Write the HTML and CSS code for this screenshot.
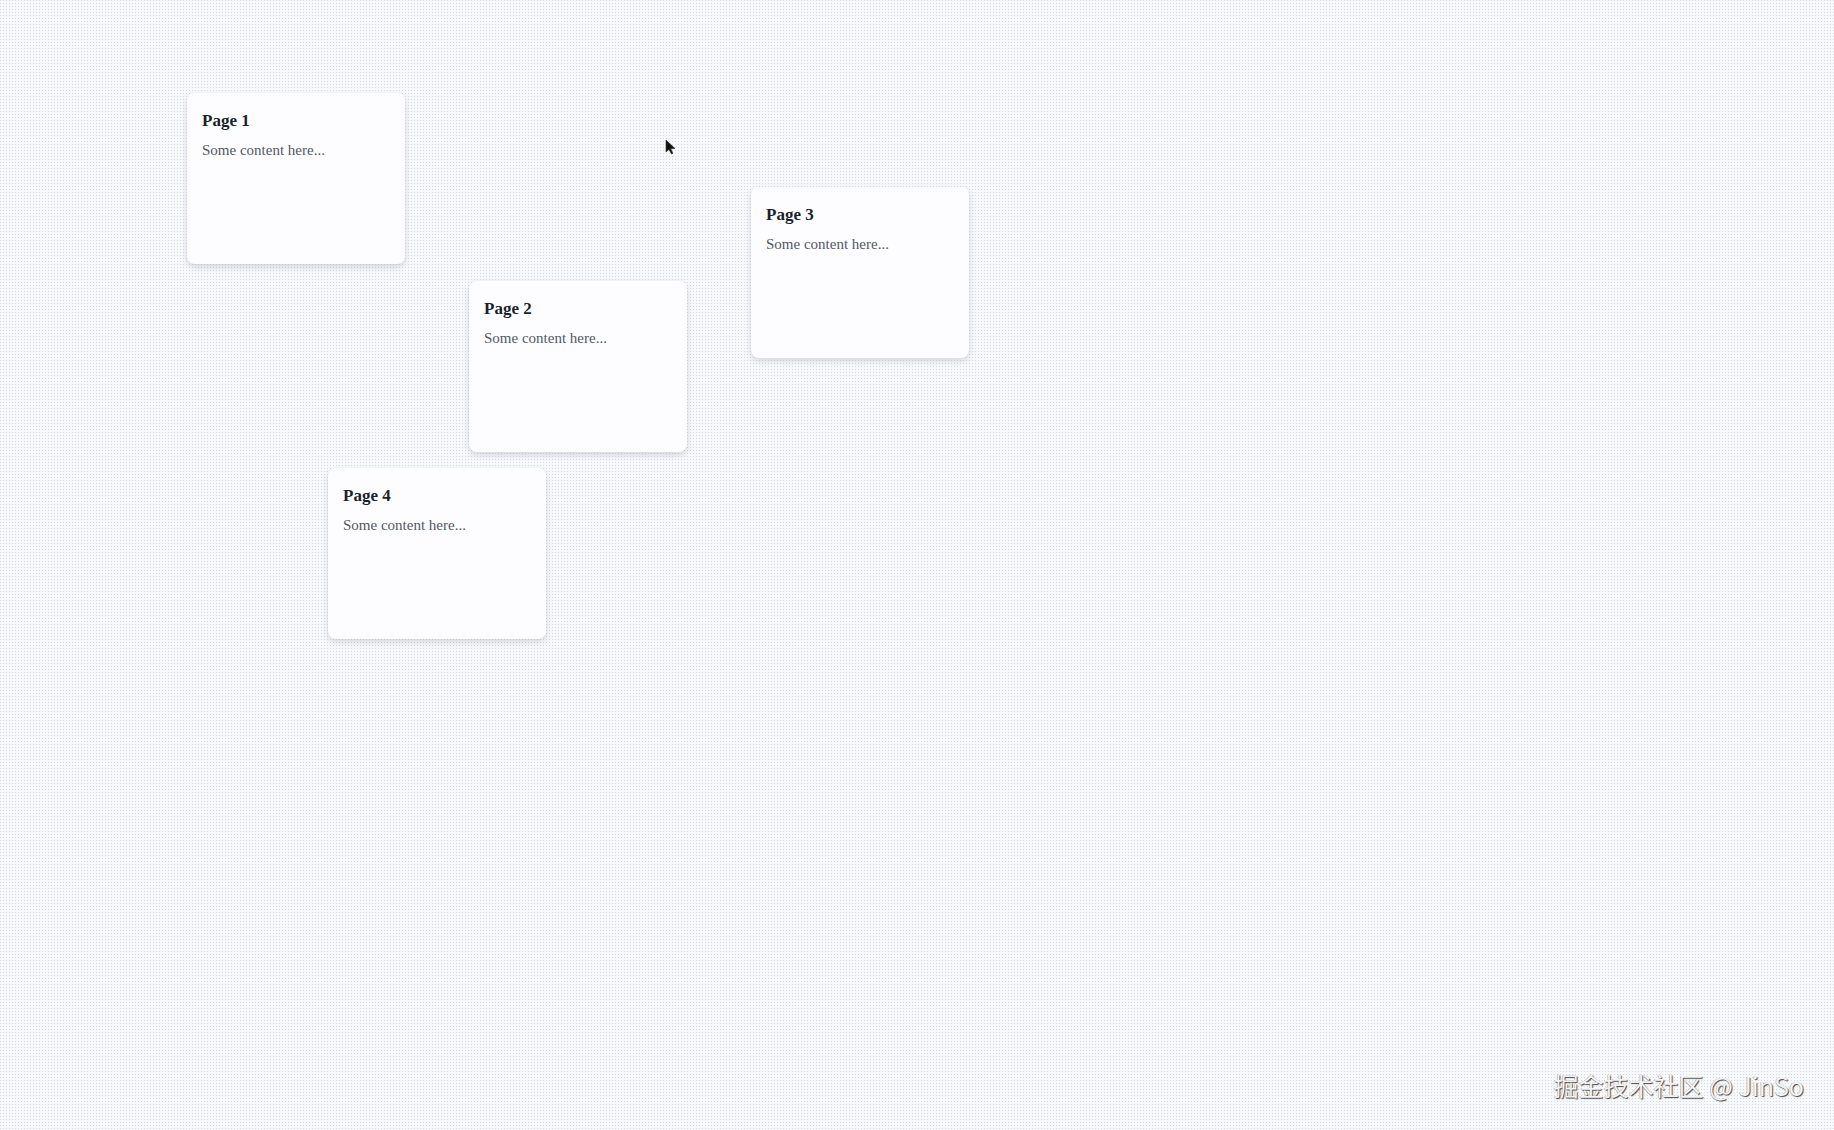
FILE: index.html
```html
<!DOCTYPE html>
<html lang="zh-CN">
<head>
<meta charset="utf-8">
<title>Pages</title>
<link rel="stylesheet" href="styles.css">
</head>
<body>
<main class="canvas">
  <div class="card card-1">
    <h3 class="card-title">Page 1</h3>
    <p class="card-text">Some content here...</p>
  </div>
  <div class="card card-2">
    <h3 class="card-title">Page 2</h3>
    <p class="card-text">Some content here...</p>
  </div>
  <div class="card card-3">
    <h3 class="card-title">Page 3</h3>
    <p class="card-text">Some content here...</p>
  </div>
  <div class="card card-4">
    <h3 class="card-title">Page 4</h3>
    <p class="card-text">Some content here...</p>
  </div>
  <svg class="cursor" width="12" height="16" viewBox="0 0 12 16" aria-hidden="true">
    <polygon points="1,1 1,13 4,10.5 6.5,15 8,14.3 5.7,9.8 10,9.5" fill="#111" stroke="#333" stroke-width="0.6" stroke-linejoin="round"/>
  </svg>
  <div class="watermark">掘金技术社区 @ JinSo</div>
</main>
</body>
</html>
```

FILE: styles.css
```css
html, body {
  margin: 0;
  padding: 0;
  width: 100%;
  height: 100%;
}

body {
  font-family: "Liberation Serif", "Times New Roman", serif;
  background-color: #d6dae5;
  background-image:
    linear-gradient(90deg, transparent 1px, #f7f8fa 1px),
    linear-gradient(transparent 1px, #f7f8fa 1px);
  background-size: 3px 3px;
  overflow: hidden;
}

.canvas {
  position: relative;
  width: 1834px;
  height: 1130px;
}

.card {
  position: absolute;
  width: 218px;
  height: 171px;
  box-sizing: border-box;
  padding: 18px 15px;
  background: #fdfdff;
  border-radius: 8px;
  box-shadow: 0 3px 6px rgba(60, 64, 80, 0.18);
}

.card-1 { left: 187px; top: 93px; }
.card-2 { left: 469px; top: 281px; }
.card-3 { left: 751px; top: 187px; }
.card-4 { left: 328px; top: 468px; }

.card-title {
  margin: 0 0 11px;
  font-size: 17px;
  font-weight: bold;
  color: #1b1f2c;
}

.card-text {
  margin: 0;
  font-size: 15px;
  color: #545864;
}

.cursor {
  position: absolute;
  left: 665px;
  top: 139px;
}

.watermark {
  position: absolute;
  right: 30px;
  bottom: 32px;
  font-family: "Noto Sans CJK SC", "Noto Sans", sans-serif;
  font-size: 25px;
  line-height: 1;
  color: #f4f4f6;
  text-shadow: 1px 1px 1px rgba(0, 0, 0, 0.7), -0.5px -0.5px 0.5px rgba(0, 0, 0, 0.35);
}
```
